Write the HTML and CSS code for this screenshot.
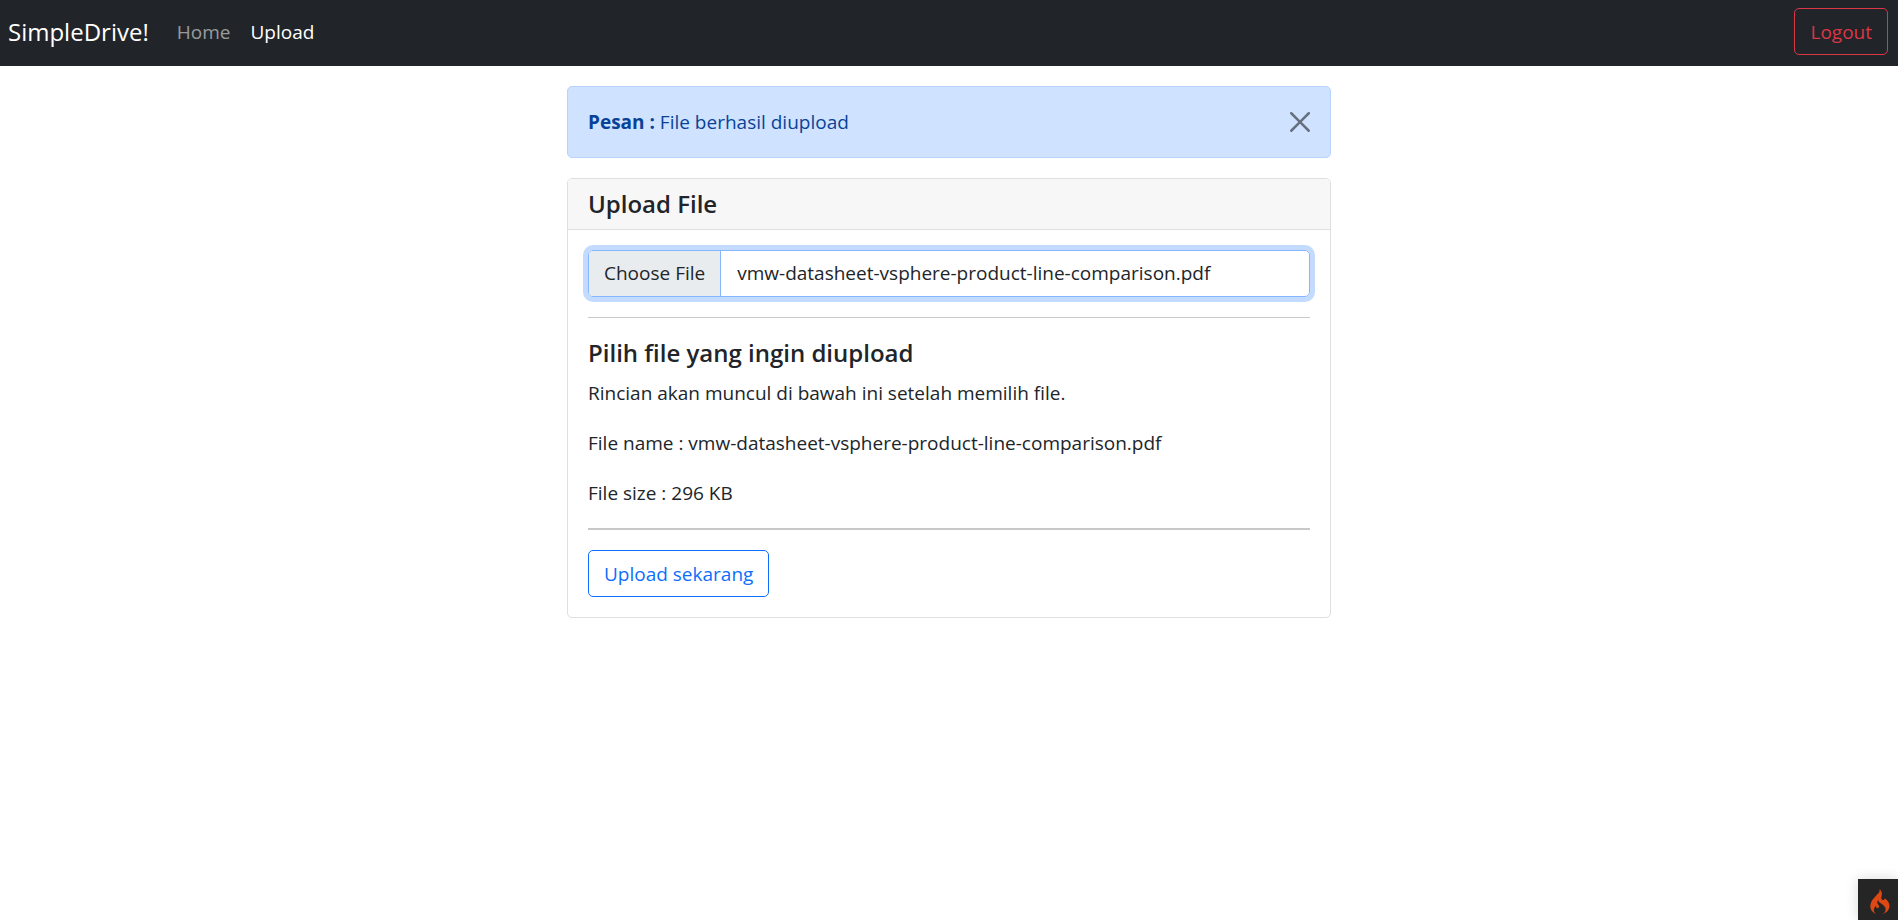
FILE: index.html
```html
<!DOCTYPE html>
<html lang="en">
<head>
<meta charset="utf-8">
<meta name="viewport" content="width=device-width, initial-scale=1">
<title>SimpleDrive!</title>
<link rel="stylesheet" href="styles.css">
</head>
<body>
<nav class="navbar">
  <a class="brand" href="#">SimpleDrive!</a>
  <ul class="nav-list">
    <li><a class="nav-link" href="#">Home</a></li>
    <li><a class="nav-link active" href="#" aria-current="page">Upload</a></li>
  </ul>
  <button class="btn btn-danger" type="button">Logout</button>
</nav>
<main class="content">
  <div class="alert" role="alert">
    <p class="alert-text"><strong>Pesan :</strong> File berhasil diupload</p>
    <button class="close" type="button" aria-label="Close">
      <svg class="close-icon" viewBox="0 0 16 16" aria-hidden="true"><path d="M.293.293a1 1 0 011.414 0L8 6.586 14.293.293a1 1 0 111.414 1.414L9.414 8l6.293 6.293a1 1 0 01-1.414 1.414L8 9.414l-6.293 6.293a1 1 0 01-1.414-1.414L6.586 8 .293 1.707a1 1 0 010-1.414z"/></svg>
    </button>
  </div>
  <section class="card">
    <header class="card-header"><h5 class="title">Upload File</h5></header>
    <form class="card-body">
      <input class="file-input" id="file" type="file" aria-label="Upload File">
      <hr class="rule">
      <h5 class="title">Pilih file yang ingin diupload</h5>
      <div class="details">
        <p class="text">Rincian akan muncul di bawah ini setelah memilih file.</p>
        <p class="text">File name : vmw-datasheet-vsphere-product-line-comparison.pdf</p>
        <p class="text">File size : 296 KB</p>
      </div>
      <hr class="rule rule-thick">
      <button class="btn btn-primary" type="button">Upload sekarang</button>
    </form>
  </section>
</main>
<button class="debug" type="button" aria-label="Debug toolbar">
  <svg class="flame" viewBox="0 0 155 200" aria-hidden="true"><path d="M73.7 3.7c2.2 7.9-.7 18.5-7.8 29-1.8 2.6-10.7 12.2-19.7 21.3-23.9 24-33.6 37.1-40.3 54.4-7.9 20.6-7.8 40.8.5 58.2C12.8 180 27.6 193 42.5 198l6 2-3-2.2c-21-15.2-22.9-38.7-4.8-58.8 2.5-2.7 4.8-5 5.1-5 .4 0 .7 2.7.7 6.1 0 5.7.2 6.2 3.7 9.5 3 2.7 4.6 3.4 7.8 3.4 5.6 0 9.9-2.4 11.6-6.5 2.9-6.9 1.6-12-5-20.5-10.5-13.4-11.7-23.3-4.3-34.7l3.1-4.8.7 4.7c1.3 8.2 5.8 12.9 25 25.8 20.9 14.1 30.6 26.1 32.8 40.5 1.1 7.2-.1 16.1-3.1 21.8-2.7 5.3-11.2 14.3-16.5 17.4-2.4 1.4-4.3 2.6-4.3 2.8 0 .2 2.4-.4 5.3-1.4 24.1-8.3 42.7-27.1 48.2-48.6 1.9-7.6 1.9-20.2-.1-28.5-3.5-15.2-14.6-30.5-29.9-41.2l-7-4.9-.6 3.3c-.8 4.8-2.6 7.6-5.9 9.3-4.5 2.3-10.3 1.9-13.8-1-6.7-5.7-7.8-14.6-3.7-30.5 3-11.6 3.2-20.6.5-29.1C88.3 18 80.6 6.3 74.8 2.2 73.1.9 73 1 73.7 3.7z"/></svg>
</button>
<script src="upload.js"></script>
</body>
</html>
```
FILE: styles.css
```css
* {
  box-sizing: border-box;
}

body {
  margin: 0;
  background: #fff;
  color: #212529;
  font-family: "Segoe UI", "Open Sans", "Noto Sans", sans-serif;
  font-size: 19px;
  line-height: 30px;
}

.navbar {
  display: flex;
  align-items: center;
  padding: 8px 10px 11px 8px;
  background: #212529;
}

.brand {
  margin-right: 28px;
  color: #fff;
  font-size: 24px;
  text-decoration: none;
}

.nav-list {
  display: flex;
  flex: 1;
  gap: 20px;
  margin: 0;
  padding: 0;
  list-style: none;
}

.nav-link {
  color: rgba(255, 255, 255, 0.55);
  text-decoration: none;
}

.nav-link.active {
  color: #fff;
}

.btn {
  height: 47px;
  padding: 0 15px;
  border: 1px solid;
  border-radius: 5px;
  background: transparent;
  font: inherit;
}

.btn-danger {
  border-color: #dc3545;
  color: #dc3545;
}

.btn-primary {
  border-color: #0d6efd;
  color: #0d6efd;
}

.content {
  max-width: 764px;
  margin: 20px auto;
}

.alert {
  display: flex;
  align-items: center;
  justify-content: space-between;
  margin-bottom: 20px;
  padding: 20px;
  border: 1px solid #b6d4fe;
  border-radius: 5px;
  background: #cfe2ff;
  color: #084298;
}

.alert-text {
  margin: 0;
}

.close {
  display: flex;
  padding: 0;
  border: 0;
  background: transparent;
  opacity: 0.5;
}

.close-icon {
  width: 20px;
  height: 20px;
}

.card {
  border: 1px solid #dfdfdf;
  border-radius: 5px;
}

.card-header {
  padding: 10px 20px;
  border-bottom: 1px solid #dfdfdf;
  border-radius: 4px 4px 0 0;
  background: #f7f7f7;
}

.title {
  margin: 0;
  font-size: 24px;
  font-weight: 600;
  line-height: 30px;
}

.card-body {
  padding: 20px;
}

.file-input {
  display: block;
  width: 100%;
  height: 47px;
  padding: 0;
  overflow: hidden;
  border: 1px solid #86b7fe;
  border-radius: 5px;
  outline: 0;
  box-shadow: 0 0 0 5px rgba(13, 110, 253, 0.25);
  color: #212529;
  font: inherit;
  line-height: 45px;
}

.file-input::file-selector-button {
  height: 45px;
  margin: 0 16px 0 0;
  padding: 0 15px;
  border: 0 solid #86b7fe;
  border-right-width: 1px;
  border-radius: 0;
  background: #e9ecef;
  color: #212529;
  font: inherit;
}

.rule {
  height: 1px;
  margin: 20px 0;
  border: 0;
  background: #c8c8ca;
}

.rule-thick {
  height: 2px;
}

.details {
  display: flex;
  flex-direction: column;
  gap: 20px;
  margin-top: 10px;
}

.text {
  margin: 0;
}

.debug {
  position: fixed;
  right: 0;
  bottom: 0;
  display: flex;
  align-items: center;
  justify-content: center;
  width: 40px;
  height: 41px;
  padding: 4px 0 0 4px;
  border: 0;
  background: #252525;
  box-shadow: 0 0 12px rgba(0, 0, 0, 0.15);
}

.flame {
  width: 20px;
  height: 25px;
  fill: #dd4814;
}
```
FILE: upload.js
```js
const input = document.getElementById("file");
const transfer = new DataTransfer();
transfer.items.add(new File(
  [new Uint8Array(296 * 1024)],
  "vmw-datasheet-vsphere-product-line-comparison.pdf",
  { type: "application/pdf" }
));
input.files = transfer.files;
```
